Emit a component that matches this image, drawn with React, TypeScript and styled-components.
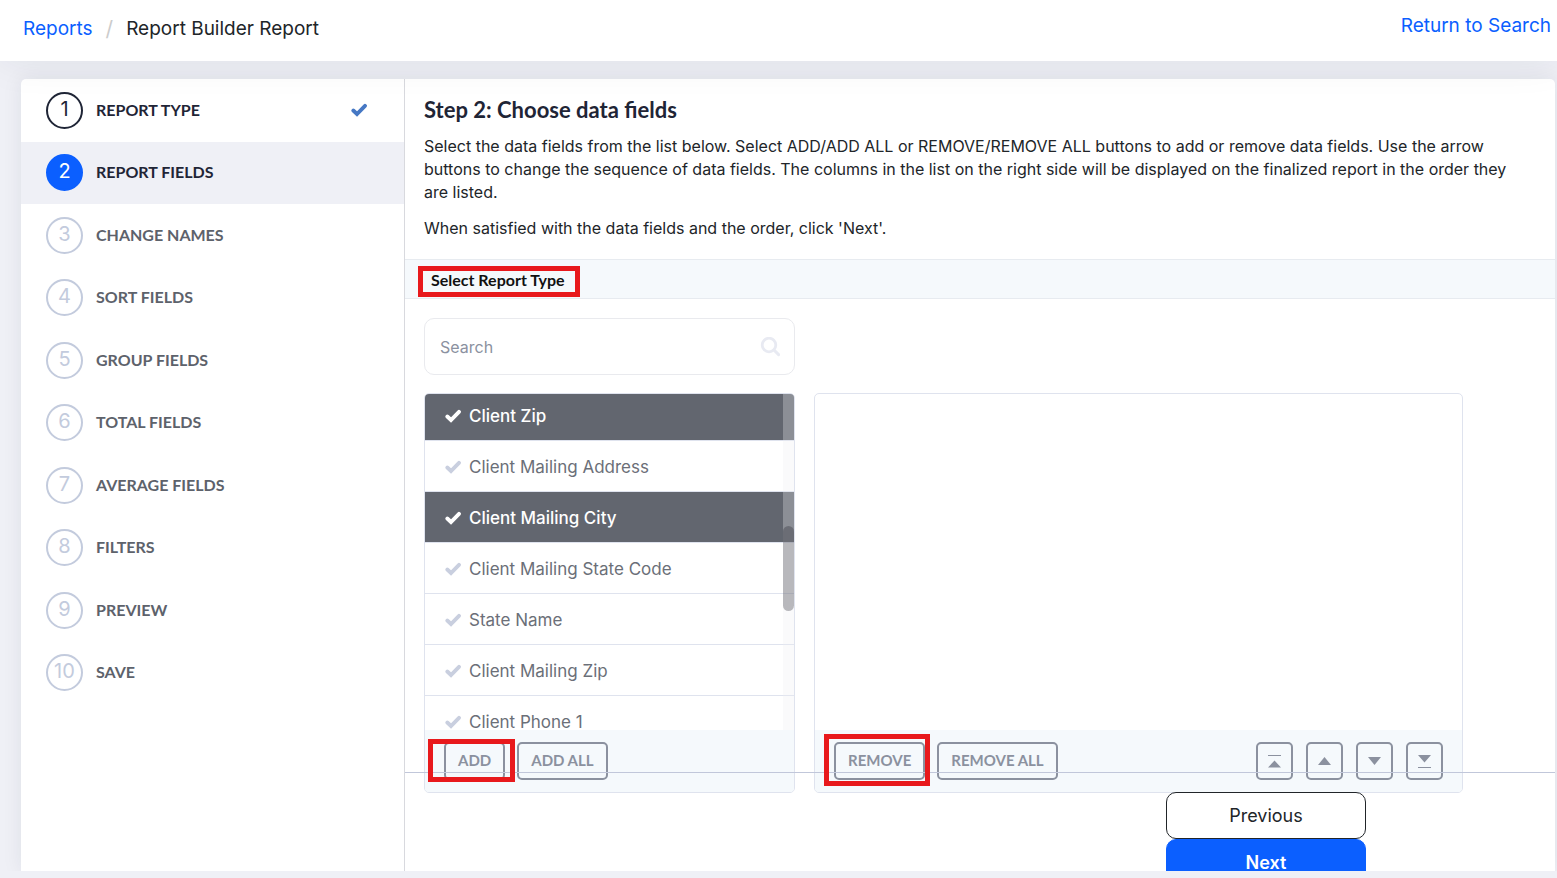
import React from "react";
import styled, { createGlobalStyle, css } from "styled-components";

const GlobalStyle = createGlobalStyle`
  *, *::before, *::after { box-sizing: border-box; }
  body {
    margin: 0;
    background: #eff0f6;
    color: #212529;
    font-family: Inter, "Liberation Sans", sans-serif;
    font-size: 16px;
  }
  p, h1, h2, ul, ol { margin: 0; padding: 0; }
  ul, ol { list-style: none; }
  a { color: #0b5fff; text-decoration: none; }
  button, input { font: inherit; }
`;

const Page = styled.div`
  display: flex;
  flex-direction: column;
  height: 100vh;
  overflow: hidden;
`;

const Header = styled.header`
  display: flex;
  justify-content: space-between;
  position: relative;
  z-index: 1;
  height: 61px;
  padding: 0 6px 0 23px;
  background: #fff;
  box-shadow: 0 0 40px rgba(31, 37, 54, 0.08);
  font-size: 19px;
`;

const Breadcrumb = styled.nav`
  display: flex;
  gap: 13px;
  line-height: 57px;
`;

const Slash = styled.span`
  color: #ccc;
  font-size: 21px;
`;

const ReturnLink = styled.a`
  line-height: 51px;
`;

const Main = styled.main`
  display: flex;
  flex: 1;
  min-height: 0;
  padding: 18px 2px 0 21px;
  overflow: hidden;
  margin-bottom: 7px;
`;

const Panel = styled.div`
  display: flex;
  flex: 1;
  min-width: 0;
  border-radius: 5px 5px 0 0;
  background: #fff;
  box-shadow: 0 0 20px rgba(31, 37, 54, 0.08);
`;

const Steps = styled.ol`
  display: grid;
  grid-template-rows: repeat(10, 1fr);
  width: 383px;
  height: 625px;
  flex: none;
`;

type StepState = "done" | "current" | "todo";

const Step = styled.li<{ $state: StepState }>`
  display: flex;
  align-items: center;
  padding: 0 37px 0 25px;
  gap: 13px;
  border-top-left-radius: ${(p) => (p.$state === "done" ? "5px" : "0")};
  background: ${(p) => (p.$state === "current" ? "#eff0f6" : "transparent")};
  color: ${(p) => (p.$state === "todo" ? "#5d626b" : "#1f2536")};
`;

const StepNumber = styled.span<{ $state: StepState }>`
  width: 37px;
  height: 37px;
  border: 2px solid;
  border-radius: 50%;
  font-size: 20px;
  line-height: 30px;
  text-align: center;
  ${(p) =>
    p.$state === "current"
      ? css`
          border-color: #0b5fff;
          background: #0b5fff;
          color: #fff;
        `
      : p.$state === "done"
        ? css`
            border-color: #1f2536;
          `
        : css`
            border-color: #c3cbdd;
            color: #c3cbdd;
          `}
`;

const StepName = styled.span`
  flex: 1;
  padding-bottom: 2px;
  font-family: Lato, sans-serif;
  font-size: 16px;
  font-weight: 700;
`;

const Content = styled.section`
  position: relative;
  flex: 1;
  min-width: 0;
  border-left: 1px solid #d8d9de;
`;

const Intro = styled.div`
  padding: 17px 29px 19px 19px;
  line-height: 23px;
  p + p { margin-top: 13px; }
`;

const Title = styled.h1`
  margin-bottom: 11px;
  color: #1f2536;
  font-family: Lato, sans-serif;
  font-size: 22px;
  font-weight: 700;
  line-height: 28px;
`;

const Band = styled.div`
  height: 40px;
  padding: 6px 13px;
  border-top: 1px solid #e7ebf0;
  border-bottom: 1px solid #e7ebf0;
  background: #f5f9fc;
`;

const MarkedHeading = styled.h2`
  width: fit-content;
  height: 31px;
  padding: 0 10px 0 8px;
  border: 5px solid #e8191c;
  color: #111;
  font-family: Lato, sans-serif;
  font-size: 16px;
  font-weight: 700;
  line-height: 17px;
`;

const Picker = styled.div`
  display: grid;
  grid-template-columns: 371px minmax(0, 1fr);
  gap: 18px 19px;
  padding: 19px 92px 0 19px;
`;

const SearchBox = styled.label`
  display: flex;
  align-items: center;
  grid-column: 1;
  height: 57px;
  padding: 0 14px 0 15px;
  border: 1px solid #e9eaee;
  border-radius: 10px;
`;

const SearchInput = styled.input`
  flex: 1;
  min-width: 0;
  padding: 0;
  border: 0;
  outline: 0;
  background: transparent;
  &::placeholder { color: #8b91a0; opacity: 1; }
`;

const ListPanel = styled.div`
  display: flex;
  flex-direction: column;
  height: 400px;
  border: 1px solid #dfe3ee;
  border-radius: 5px;
  overflow: hidden;
`;

const FirstColumn = styled(ListPanel)`
  grid-column: 1;
`;

const Viewport = styled.div`
  position: relative;
  flex: 1;
  min-height: 0;
  overflow: hidden;
`;

const FieldList = styled.ul`
  margin-top: -4px;
`;

const Field = styled.li<{ $selected?: boolean }>`
  display: flex;
  align-items: center;
  gap: 8px;
  height: 51px;
  padding: 2px 0 0 20px;
  border-bottom: 1px solid #dfe3ee;
  background: ${(p) => (p.$selected ? "#62666f" : "#fff")};
  color: ${(p) => (p.$selected ? "#fff" : "#6b6f78")};
  font-size: 17px;
  font-weight: ${(p) => (p.$selected ? 500 : 400)};
  svg { color: ${(p) => (p.$selected ? "#fff" : "#c9cfdf")}; }
`;

const ScrollTrack = styled.div`
  position: absolute;
  top: 0;
  right: 0;
  bottom: 0;
  width: 11px;
  padding-top: 132px;
  background: rgba(238, 238, 241, 0.3);
`;

const ScrollThumb = styled.div`
  height: 85px;
  border-radius: 6px;
  background: rgba(32, 34, 44, 0.3);
`;

const Actions = styled.div`
  display: flex;
  align-items: flex-start;
  gap: 12px;
  height: 62px;
  padding: 12px 19px 0;
  background: #f5f9fc;
`;

const ActionButton = styled.button`
  display: block;
  height: 38px;
  padding: 0 12px 2px;
  border: 2px solid #8b919f;
  border-radius: 5px;
  background: transparent;
  color: #8b919f;
  font-family: Lato, sans-serif;
  font-size: 15px;
  font-weight: 700;
  line-height: 32px;
  white-space: nowrap;
`;

const IconButton = styled(ActionButton)`
  display: grid;
  place-items: center;
  width: 37px;
  padding: 0;
`;

const IconGroup = styled.div`
  display: flex;
  gap: 13px;
  margin-left: auto;
`;

const Marked = styled.span<{ $inset: string }>`
  position: relative;
  &::after {
    content: "";
    position: absolute;
    inset: ${(p) => p.$inset};
    border: 5px solid #e8191c;
    pointer-events: none;
    z-index: 2;
  }
`;

const Footer = styled.footer`
  position: absolute;
  top: 693px;
  left: 0;
  right: 0;
  display: flex;
  flex-direction: column;
  align-items: flex-end;
  padding: 19px 189px 0 0;
  border-top: 1px solid #c1c7da;
`;

const NavButton = styled.button<{ $primary?: boolean }>`
  width: 200px;
  height: 47px;
  padding: 0;
  border: 1px solid ${(p) => (p.$primary ? "#0b5fff" : "#212529")};
  border-radius: 10px;
  background: ${(p) => (p.$primary ? "#0b5fff" : "#fff")};
  color: ${(p) => (p.$primary ? "#fff" : "#212529")};
  font-size: 18px;
  font-weight: ${(p) => (p.$primary ? 600 : 400)};
`;

const Check = ({ color = "currentColor" }: { color?: string }) => (
  <svg width="16" height="14" viewBox="0 0 16 14" fill="none" aria-hidden="true">
    <path d="M2.300 7.500 6 11 14 2.800" stroke={color} strokeWidth="3.8" strokeLinecap="round" strokeLinejoin="miter" />
  </svg>
);

const SearchIcon = () => (
  <svg width="20" height="20" viewBox="0 0 20 20" fill="none" stroke="#e8eaf2" aria-hidden="true">
    <circle cx="9" cy="8" r="6.8" strokeWidth="2.8" />
    <path d="m14 13 4.600 4.600" strokeWidth="3" strokeLinecap="round" />
  </svg>
);

const arrows = [
  { label: "Move to top", shape: "M0 0h13v1H0zM6.500 5.500 13 12.500H0z" },
  { label: "Move up", shape: "M6.500 2 13 10H0z" },
  { label: "Move down", shape: "M0 2h13L6.500 10z" },
  { label: "Move to bottom", shape: "M0 0h13L6.500 7.500zM0 12h13v1H0z" },
];

const steps = [
  "REPORT TYPE",
  "REPORT FIELDS",
  "CHANGE NAMES",
  "SORT FIELDS",
  "GROUP FIELDS",
  "TOTAL FIELDS",
  "AVERAGE FIELDS",
  "FILTERS",
  "PREVIEW",
  "SAVE",
];

const fields = [
  { name: "Client Zip", selected: true },
  { name: "Client Mailing Address" },
  { name: "Client Mailing City", selected: true },
  { name: "Client Mailing State Code" },
  { name: "State Name" },
  { name: "Client Mailing Zip" },
  { name: "Client Phone 1" },
];

const stateOf = (index: number): StepState => (index === 0 ? "done" : index === 1 ? "current" : "todo");

export default function App() {
  return (
    <Page>
      <GlobalStyle />
      <Header>
        <Breadcrumb aria-label="Breadcrumb">
          <a href="#reports">Reports</a>
          <Slash>/</Slash>
          <span>Report Builder Report</span>
        </Breadcrumb>
        <ReturnLink href="#search">Return to Search</ReturnLink>
      </Header>
      <Main>
        <Panel>
          <Steps>
            {steps.map((name, i) => (
              <Step key={name} $state={stateOf(i)}>
                <StepNumber $state={stateOf(i)}>{i + 1}</StepNumber>
                <StepName>{name}</StepName>
                {i === 0 && <Check color="#4678c4" />}
              </Step>
            ))}
          </Steps>
          <Content>
            <Intro>
              <Title>Step 2: Choose data fields</Title>
              <p>
                Select the data fields from the list below. Select ADD/ADD ALL or REMOVE/REMOVE ALL buttons to add or
                remove data fields. Use the arrow buttons to change the sequence of data fields. The columns in the list
                on the right side will be displayed on the finalized report in the order they are listed.
              </p>
              <p>When satisfied with the data fields and the order, click 'Next'.</p>
            </Intro>
            <Band>
              <MarkedHeading>Select Report Type</MarkedHeading>
            </Band>
            <Picker>
              <SearchBox>
                <SearchInput type="text" placeholder="Search" aria-label="Search" />
                <SearchIcon />
              </SearchBox>
              <FirstColumn>
                <Viewport>
                  <FieldList>
                    {fields.map((f) => (
                      <Field key={f.name} $selected={f.selected}>
                        <Check />
                        {f.name}
                      </Field>
                    ))}
                  </FieldList>
                  <ScrollTrack>
                    <ScrollThumb />
                  </ScrollTrack>
                </Viewport>
                <Actions>
                  <Marked $inset="-3px -10px -2px -16px">
                    <ActionButton type="button">ADD</ActionButton>
                  </Marked>
                  <ActionButton type="button">ADD ALL</ActionButton>
                </Actions>
              </FirstColumn>
              <ListPanel>
                <Viewport />
                <Actions>
                  <Marked $inset="-8px -5px -6px -10px">
                    <ActionButton type="button">REMOVE</ActionButton>
                  </Marked>
                  <ActionButton type="button">REMOVE ALL</ActionButton>
                  <IconGroup>
                    {arrows.map((a) => (
                      <IconButton key={a.label} type="button" aria-label={a.label}>
                        <svg width="13" height="13" viewBox="0 0 13 13" fill="currentColor" aria-hidden="true">
                          <path d={a.shape} />
                        </svg>
                      </IconButton>
                    ))}
                  </IconGroup>
                </Actions>
              </ListPanel>
            </Picker>
            <Footer>
              <NavButton type="button">Previous</NavButton>
              <NavButton type="button" $primary>
                Next
              </NavButton>
            </Footer>
          </Content>
        </Panel>
      </Main>
    </Page>
  );
}
